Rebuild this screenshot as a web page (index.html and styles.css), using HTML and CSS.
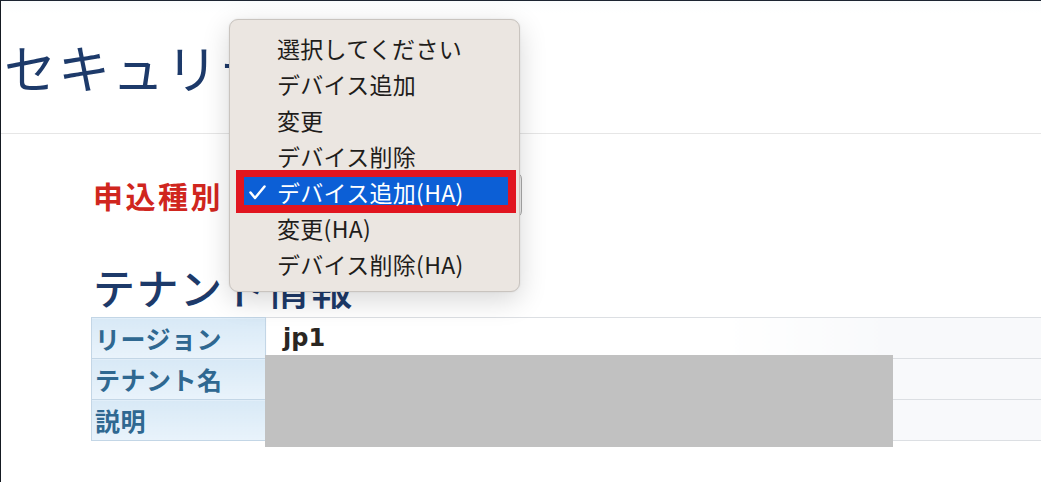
FILE: index.html
```html
<!DOCTYPE html>
<html lang="ja">
<head>
<meta charset="utf-8">
<title>セキュリティ</title>
<link rel="stylesheet" href="styles.css">
</head>
<body>
<div class="page">
  <header class="header">
    <h1 class="title">セキュリティ</h1>
  </header>
  <main class="main">
    <div class="form-row">
      <div class="label">申込種別</div>
      <div class="select"></div>
    </div>
    <h2 class="section">テナント情報</h2>
    <div class="table-wrap">
      <table class="info">
        <tr><th>リージョン</th><td>jp1</td></tr>
        <tr><th>テナント名</th><td></td></tr>
        <tr><th>説明</th><td></td></tr>
      </table>
      <div class="redact"></div>
    </div>
  </main>

  <div class="menu">
    <div class="item">選択してください</div>
    <div class="item">デバイス追加</div>
    <div class="item">変更</div>
    <div class="item">デバイス削除</div>
    <div class="item sel">
      <svg class="check" width="17" height="15" viewBox="0 0 17 15"><polyline points="1.5,7.5 6,13 15.5,1.5" fill="none" stroke="#fff" stroke-width="2.5" stroke-linecap="round" stroke-linejoin="round"/></svg>
      <span class="txt">デバイス追加(HA)</span>
    </div>
    <div class="item">変更(HA)</div>
    <div class="item">デバイス削除(HA)</div>
  </div>
</div>
</body>
</html>
```

FILE: styles.css
```css
html, body {
  margin: 0;
  padding: 0;
  background: #ffffff;
  overflow: hidden;
}
body {
  font-family: "Noto Sans CJK JP", "Noto Sans", sans-serif;
}
.page {
  position: relative;
  width: 1041px;
  height: 482px;
  box-sizing: border-box;
  border-top: 1px solid #1c2431;
  border-left: 1px solid #151a22;
  overflow: hidden;
}
.header {
  height: 132px;
  border-bottom: 1px solid #e6e6e6;
  display: flex;
  align-items: center;
  padding-left: 3px;
  background: linear-gradient(#fafcfd 0, #ffffff 12px);
}
.title {
  margin: 0;
  font-size: 52px;
  line-height: 1;
  font-weight: 400;
  color: #1d3a6a;
  letter-spacing: 2px;
  white-space: nowrap;
}
.main {
  padding-left: 90px;
}
.form-row {
  margin-top: 38px;
  display: flex;
  align-items: center;
  height: 46px;
}
.label {
  width: 141px;
  padding-left: 2px;
  box-sizing: border-box;
  font-size: 30px;
  font-weight: 700;
  color: #d0261e;
  letter-spacing: 2.5px;
  line-height: 1;
}
.select {
  width: 290px;
  height: 46px;
  box-sizing: border-box;
  border: 1px solid #a9a9a9;
  border-radius: 7px;
  background: #f4f4f4;
}
.section {
  margin: 44px 0 5px 2px;
  font-size: 42px;
  line-height: 50px;
  height: 50px;
  font-weight: 500;
  color: #1d3a6a;
  letter-spacing: 1.5px;
}
.table-wrap {
  position: relative;
}
.info {
  width: 100%;
  border-collapse: collapse;
}
.info th, .info td {
  height: 41px;
  padding: 0;
  box-sizing: border-box;
}
.info th {
  width: 174px;
  text-align: left;
  padding-left: 3px;
  border: 1px solid #c3d6e6;
  background: linear-gradient(#d8e9f6, #e9f3fb);
  color: #2f6891;
  font-size: 25px;
  font-weight: 700;
  letter-spacing: 0.5px;
  line-height: 1;
}
.info td {
  border-top: 1px solid #dcdfe3;
  border-bottom: 1px solid #dcdfe3;
  background: #f8f9fb;
  padding-left: 17px;
  font-family: "DejaVu Sans", sans-serif;
  font-size: 24px;
  font-weight: 700;
  color: #2a2622;
}
.info tr:first-child td {
  background: linear-gradient(90deg, #ffffff 0, #ffffff 460px, #f8f9fb 620px);
}
.redact {
  position: absolute;
  left: 174px;
  top: 38px;
  width: 628px;
  height: 92px;
  background: #c1c1c1;
}
.menu {
  position: absolute;
  left: 228px;
  top: 18px;
  width: 291px;
  height: 273px;
  box-sizing: border-box;
  padding-top: 10px;
  background: #ebe6e1;
  border: 1px solid #c9c4bf;
  border-radius: 9px;
  box-shadow: 0 8px 28px rgba(0, 0, 0, 0.16), 0 0 2px rgba(0, 0, 0, 0.1);
}
.item {
  position: relative;
  height: 36px;
  display: flex;
  align-items: center;
  padding-left: 47px;
  font-size: 23px;
  line-height: 1;
  color: #1f1d1b;
  white-space: nowrap;
  letter-spacing: 0.3px;
}
.item.sel {
  color: #ffffff;
}
.item.sel::before {
  content: "";
  position: absolute;
  left: 6px;
  right: 3px;
  top: -4px;
  bottom: -3px;
  border: 8px solid #e1151f;
  border-top-width: 7px;
  background: #0c5fd6;
}
.check {
  position: absolute;
  left: 19px;
  top: 11px;
}
.txt {
  position: relative;
}
```
